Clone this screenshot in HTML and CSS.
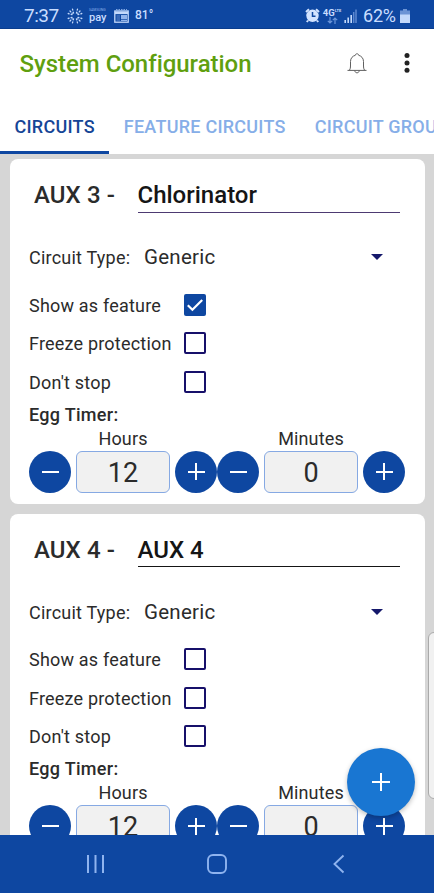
FILE: index.html
```html
<!DOCTYPE html>
<html lang="en">
<head>
<meta charset="utf-8">
<title>System Configuration</title>
<link rel="stylesheet" href="styles.css">
</head>
<body>
<div class="phone">
  <header class="status">
    <span class="clock">7:37</span>
    <svg class="burst" width="16" height="16" viewBox="0 0 16 16" fill="none" stroke="#c3d9fb" stroke-width="1.3" stroke-linecap="round">
      <path d="M5.500 1.200 6.700 5.600M10.500 1.200 9.300 5.600M5.500 14.800 6.700 10.400M10.500 14.800 9.300 10.400M1.200 5.500 5.600 6.700M1.200 10.500 5.600 9.300M14.800 5.500 10.400 6.700M14.800 10.500 10.400 9.300M3 3 5.200 5.200M13 3 10.800 5.200M3 13l2.200-2.200M13 13l-2.200-2.200" stroke-dasharray="1 2"/>
    </svg>
    <span class="pay"><small>SAMSUNG</small><b>pay</b></span>
    <svg class="news" width="15" height="14" viewBox="0 0 15 14">
      <path d="M2 .6h11" stroke="#89aee6" stroke-dasharray="1.5 1"/>
      <rect x=".8" y="2" width="13.4" height="11.2" fill="none" stroke="#c3d9fb" stroke-width="1.3"/>
      <path d="M1 3.800h13" stroke="#c3d9fb" stroke-width="2.600"/>
      <path d="M2.500 7h3.500M2.500 9h3.500M2.500 11h3.500" stroke="#789fda" stroke-width=".8"/>
      <path d="M7 6h6v4.300H7z" fill="#91b4ec"/>
      <path d="M7 11.500h6" stroke="#91b4ec"/>
    </svg>
    <span class="temp">81°</span>
    <span class="spring"></span>
    <svg class="alarm" width="15" height="15" viewBox="0 0 15 15">
      <path d="M1 4 4 1.200M14 4 11 1.200M3 12.500 1.800 14M12 12.500l1.200 1.500" stroke="#d2e3ff" stroke-width="2"/>
      <circle cx="7.500" cy="7.800" r="6.200" fill="#d2e3ff"/>
      <path d="M7.500 4v4.200h3" fill="none" stroke="#0e47a1" stroke-width="1.500"/>
    </svg>
    <span class="net">
      <span class="net-type">4G<small>LTE</small></span>
      <svg width="11" height="7" viewBox="0 0 11 7" fill="none" stroke="#6c96da" stroke-width="1.200"><path d="M3 0v6M.8 3.800 3 6l2.200-2.200M8 7V1M5.800 3.200 8 1l2.200 2.200"/></svg>
    </span>
    <svg class="signal" width="13" height="14" viewBox="0 0 13 14">
      <path d="M1.200 14v-3M4.200 14V8.500M7.200 14V6" stroke="#c3d9fb" stroke-width="1.600"/>
      <path d="M9.700 14V3M12 14V.5" stroke="#5f89d0" stroke-width="1.500"/>
    </svg>
    <span class="percent">62%</span>
    <svg class="battery" width="10" height="14" viewBox="0 0 10 14">
      <path d="M3 0h4v1.500h3v4.500H0V1.500h3z" fill="#6c94d5"/>
      <path d="M0 5.500h10V14H0z" fill="#c3d9fb"/>
    </svg>
  </header>

  <div class="appbar">
    <h1>System Configuration</h1>
    <svg class="bell" width="20" height="21" viewBox="0 0 20 21" fill="none" stroke="#606060" stroke-width="1">
      <path d="M.5 17.400h19M2.500 17.200C3.300 16 3.500 14.500 3.500 13V8.500C3.500 5 5.800 3 8.300 2.300 8.500 1.200 9 .8 10 .8s1.500.4 1.700 1.500C14.200 3 16.500 5 16.500 8.500V13c0 1.500.2 3 1 4.200M7.700 17.600c.3 1.400 1 2.200 2.300 2.200s2-.8 2.300-2.200"/>
    </svg>
    <svg class="more" width="6" height="20" viewBox="0 0 6 20" fill="#222"><circle cx="3" cy="2.600" r="2.500"/><circle cx="3" cy="10" r="2.500"/><circle cx="3" cy="17.300" r="2.500"/></svg>
  </div>

  <nav class="tabs">
    <span class="tab active">CIRCUITS</span>
    <span class="tab">FEATURE CIRCUITS</span>
    <span class="tab">CIRCUIT GROUPS</span>
  </nav>

  <main class="list">
    <section class="card">
      <div class="name-row"><span class="aux">AUX 3 -</span><span class="name violet">Chlorinator</span></div>
      <div class="type-row"><span class="type-label">Circuit Type:</span><span class="type">Generic</span><i class="caret"></i></div>
      <div class="check-row"><span>Show as feature</span><span class="box checked"><svg width="22" height="22" viewBox="0 0 22 22" fill="none" stroke="#fff" stroke-width="2.200"><path d="m3.800 11.200 4.600 4.600 9.800-9.900"/></svg></span></div>
      <div class="check-row"><span>Freeze protection</span><span class="box"></span></div>
      <div class="check-row"><span>Don't stop</span><span class="box"></span></div>
      <div class="egg">Egg Timer:</div>
      <div class="timers">
        <div class="timer"><span class="unit">Hours</span><i class="btn minus"></i><span class="value">12</span><i class="btn plus"></i></div>
        <div class="timer"><span class="unit">Minutes</span><i class="btn minus"></i><span class="value">0</span><i class="btn plus"></i></div>
      </div>
    </section>
    <section class="card">
      <div class="name-row"><span class="aux">AUX 4 -</span><span class="name">AUX 4</span></div>
      <div class="type-row"><span class="type-label">Circuit Type:</span><span class="type">Generic</span><i class="caret"></i></div>
      <div class="check-row"><span>Show as feature</span><span class="box"></span></div>
      <div class="check-row"><span>Freeze protection</span><span class="box"></span></div>
      <div class="check-row"><span>Don't stop</span><span class="box"></span></div>
      <div class="egg">Egg Timer:</div>
      <div class="timers">
        <div class="timer"><span class="unit">Hours</span><i class="btn minus"></i><span class="value">12</span><i class="btn plus"></i></div>
        <div class="timer"><span class="unit">Minutes</span><i class="btn minus"></i><span class="value">0</span><i class="btn plus"></i></div>
      </div>
    </section>
    <div class="edge-handle"></div>
    <div class="fab"></div>
  </main>

  <footer class="navbar">
    <svg width="20" height="20" viewBox="0 0 20 20" stroke="#8fb4ef" stroke-width="2"><path d="M3 1v18M10.500 1v18M18 1v18"/></svg>
    <svg width="20" height="20" viewBox="0 0 20 20" fill="none" stroke="#8fb4ef" stroke-width="1.900"><rect x="1" y="1" width="18" height="18" rx="5"/></svg>
    <svg width="20" height="20" viewBox="0 0 20 20" fill="none" stroke="#8fb4ef" stroke-width="1.900"><path d="M13.500 1.500 4.500 10l9 8.500"/></svg>
  </footer>
</div>
</body>
</html>
```
FILE: styles.css
```css
* { box-sizing: border-box; }
body { margin: 0; font-family: Roboto, "Liberation Sans", sans-serif; color: #2b2b2b; }
.phone { width: 434px; height: 893px; display: flex; flex-direction: column; overflow: hidden; background: #fff; }

.status { height: 29px; flex: none; display: flex; align-items: center; padding: 3px 24px 0 24px; background: #0e47a1; border-bottom: 1px solid #0a3d8e; color: #c9ddff; }
.status svg { flex: none; }
.clock { width: 43px; font-size: 19px; line-height: 24px; letter-spacing: -.5px; }
.pay { width: 18px; margin-left: 6px; }
.pay small { display: block; font-size: 3.500px; line-height: 4px; color: #8fb1eb; }
.pay b { display: block; font-size: 11px; line-height: 13px; font-weight: 500; margin-top: -1px; }
.news { margin-left: 7px; }
.temp { margin-left: 6px; font-size: 12px; font-weight: 500; line-height: 14px; margin-top: -1px; }
.spring { flex: 1; }
.net { width: 20px; margin-left: 2px; display: flex; flex-direction: column; align-items: center; }
.net-type { display: flex; font-size: 9.500px; line-height: 9px; font-weight: 700; }
.net-type small { font-size: 4px; line-height: 5px; }
.signal { margin-left: 2px; }
.percent { margin-left: 6px; width: 34px; font-size: 18px; line-height: 24px; letter-spacing: -.2px; white-space: nowrap; }
.battery { margin-left: 3px; }

.appbar { height: 70px; flex: none; display: flex; align-items: center; padding: 0 24px 0 19.500px; }
h1 { flex: 1; margin: 0; font-size: 24px; line-height: 30px; font-weight: 500; letter-spacing: -.03px; color: #5f9f0f; white-space: nowrap; }
.bell { margin-top: -2px; }
.more { margin: -2px 0 0 37.500px; }

.tabs { height: 55px; flex: none; display: flex; overflow: hidden; }
.tab { flex: none; height: 55px; padding: 0 14.500px; font-size: 18px; line-height: 55px; letter-spacing: .25px; font-weight: 500; color: #86aee8; white-space: nowrap; }
.tab.active { color: #154596; border-bottom: 3px solid #0e47a1; }

.list { position: relative; flex: 1; min-height: 0; overflow: hidden; padding: 5px 9.500px 0; display: flex; flex-direction: column; gap: 9.500px; background: #d6d6d6; }
.card { height: 345px; flex: none; padding: 0 19.500px; border-radius: 8px; background: #fff; white-space: nowrap; }
.name-row { height: 53.500px; display: flex; font-size: 24px; line-height: 72px; font-weight: 500; padding: 0 5px; }
.aux { width: 103.500px; letter-spacing: .1px; }
.name { flex: 1; color: #151515; border-bottom: 1px solid #151515; }
.name.violet { border-color: #4d3a72; }
.type-row { height: 38px; margin: 26px 0 9.500px; display: flex; align-items: center; }
.type-label { width: 115px; font-size: 18px; letter-spacing: .22px; }
.type { flex: 1; font-size: 20.500px; line-height: 24px; letter-spacing: .25px; margin-top: -1px; }
.caret { margin: -1px 22.500px 0 0; border: 6px solid transparent; border-top-color: #15186b; border-bottom: 0; }
.check-row { height: 38.500px; display: flex; align-items: center; font-size: 18px; letter-spacing: .2px; }
.check-row > span:first-child { width: 155px; }
.box { width: 22px; height: 22px; margin-top: -1px; border: 2px solid #17106a; border-radius: 2px; }
.box.checked { border: 0; background: #0e47a1; }
.box svg { display: block; }
.egg { height: 25px; font-size: 18px; line-height: 25px; font-weight: 500; letter-spacing: .3px; }
.timers { display: flex; }
.timer { width: 188px; display: grid; grid-template: 24px 42px / 42px 94px 42px; column-gap: 5px; }
.unit { grid-column: 1 / -1; text-align: center; font-size: 18px; line-height: 24px; letter-spacing: .15px; }
.value { border: 1px solid #86a9e3; border-radius: 6px; background: #f1f1f1; text-align: center; font-size: 27px; line-height: 43px; }
.btn { border-radius: 50%; background: linear-gradient(#fff, #fff) center / 17px 2px no-repeat #0e47a1; }
.plus { background: linear-gradient(#fff, #fff) center / 17px 2px no-repeat, linear-gradient(#fff, #fff) center / 2px 17px no-repeat, #0e47a1; }

.edge-handle { position: absolute; left: 428px; top: 478px; width: 12px; height: 167px; border: 1px solid #aaa; border-radius: 6px; background: #f1f1f1; }
.fab { position: absolute; left: 347px; top: 594px; width: 68px; height: 68px; border-radius: 50%; background: linear-gradient(#fff, #fff) center / 18px 2px no-repeat, linear-gradient(#fff, #fff) center / 2px 18px no-repeat, #1976d2; box-shadow: 0 2px 5px rgba(0, 0, 0, .25); }

.navbar { height: 58px; flex: none; display: flex; justify-content: space-between; align-items: center; padding: 0 84.500px 0 85px; background: #0e47a1; }
```
